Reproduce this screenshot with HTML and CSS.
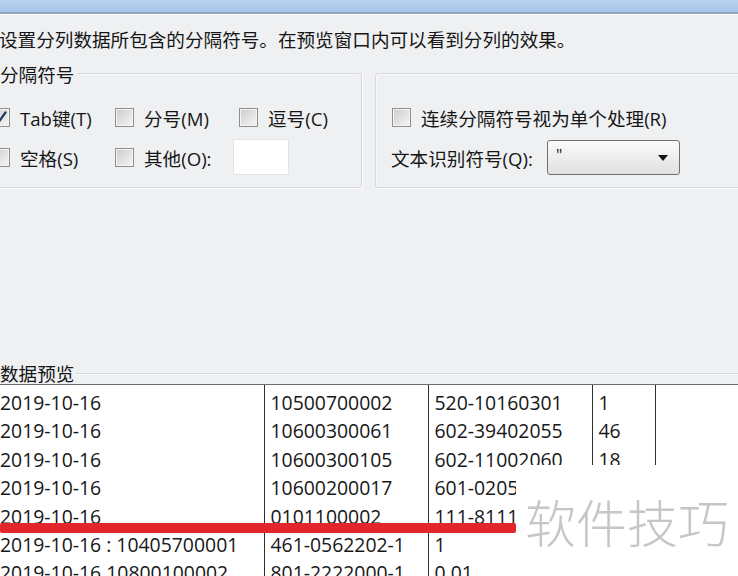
FILE: index.html
```html
<!DOCTYPE html>
<html lang="zh-CN">
<head>
  <meta charset="UTF-8" />
  <title>文本分列向导 - 第 2 步</title>
  <link rel="stylesheet" href="styles.css">
</head>
<body>
  <div class="titlebar"></div>

  <p class="intro">设置分列数据所包含的分隔符号。在预览窗口内可以看到分列的效果。</p>

  <div class="options">
    <div class="group group-delims">
      <div class="group-title">分隔符号</div>
      <div class="opt-row first-row">
        <label class="opt">
          <span class="checkbox checked">
            <svg viewBox="0 0 19 19" width="19" height="19"><path d="M4.5 9.5 L8 13.5 L14.5 4.5" fill="none" stroke="#1e3a68" stroke-width="2.2" stroke-linecap="round" stroke-linejoin="round"/></svg>
          </span>Tab键(T)
        </label>
        <label class="opt"><span class="checkbox"></span>分号(M)</label>
        <label class="opt"><span class="checkbox"></span>逗号(C)</label>
      </div>
      <div class="opt-row">
        <label class="opt"><span class="checkbox"></span>空格(S)</label>
        <label class="opt opt-short"><span class="checkbox"></span>其他(O):</label>
        <span class="textbox"></span>
      </div>
    </div>

    <div class="group group-more">
      <div class="opt-row">
        <label class="opt opt-wide"><span class="checkbox"></span>连续分隔符号视为单个处理(R)</label>
      </div>
      <div class="opt-row">
        <span class="field-label">文本识别符号(Q):</span>
        <span class="select">
          <span class="select-value">"</span>
          <svg class="select-arrow" viewBox="0 0 10 6" width="10" height="6"><path d="M0 0 H10 L5 6 Z" fill="#111"/></svg>
        </span>
      </div>
    </div>
  </div>

  <div class="preview">
    <div class="preview-head"><span>数据预览</span></div>
    <div class="preview-box">
      <table class="grid">
        <colgroup>
          <col class="c1"><col class="c2"><col class="c3"><col class="c4"><col>
        </colgroup>
        <tbody>
          <tr><td>2019-10-16</td><td>10500700002</td><td>520-10160301</td><td>1</td><td></td></tr>
          <tr><td>2019-10-16</td><td>10600300061</td><td>602-39402055</td><td>46</td><td></td></tr>
          <tr><td>2019-10-16</td><td>10600300105</td><td>602-11002060</td><td>18</td><td></td></tr>
          <tr><td>2019-10-16</td><td>10600200017</td><td>601-0205</td><td></td><td></td></tr>
          <tr><td>2019-10-16</td><td>0101100002</td><td>111-8111</td><td></td><td></td></tr>
          <tr><td>2019-10-16 : 10405700001</td><td>461-0562202-1</td><td>1</td><td></td><td></td></tr>
          <tr><td>2019-10-16 10800100002</td><td>801-2222000-1</td><td>0.01</td><td></td><td></td></tr>
        </tbody>
      </table>
      <div class="mark-line"></div>
      <div class="watermark">软件技巧</div>
    </div>
  </div>
</body>
</html>
```

FILE: styles.css
```css
:root {
  --bg: #eff0f2;
  --text: #161616;
  --etch: #d6d9dd;
}

html, body {
  overflow: hidden;
}

body {
  margin: 0;
  background: var(--bg);
  color: var(--text);
  font-family: "Open Sans", "Noto Sans CJK SC", sans-serif;
  font-size: 18.6px;
}

.titlebar {
  height: 12px;
  background: linear-gradient(#bad2f1, #a9c4ea);
  border-bottom: 2px solid #8fa4bb;
  box-shadow: 0 1px 0 #fbfbfb;
}

.intro {
  margin: 14px 0 0 -1px;
  line-height: 24px;
  white-space: nowrap;
}

.options {
  display: flex;
  gap: 13px;
  width: 780px;
  margin: 21px 0 0 -20px;
}

.group {
  box-sizing: border-box;
  border: 1px solid var(--etch);
  border-radius: 3px;
  box-shadow: inset 1px 1px 0 #fafafa, 1px 1px 0 #fafafa;
  padding-bottom: 10px;
}

.group-delims {
  width: 382px;
  padding-left: 10px;
}

.group-more {
  width: 385px;
  padding-top: 23px;
  padding-left: 16px;
}

.group-title {
  width: fit-content;
  margin: -11px 0 0 9px;
  padding-right: 3px;
  line-height: 24px;
  background: var(--bg);
}

.first-row {
  margin-top: 10px;
}

.opt-row {
  display: flex;
  align-items: center;
  height: 40px;
  white-space: nowrap;
}

.opt {
  display: flex;
  align-items: center;
  gap: 10px;
  width: 124px;
  flex-shrink: 0;
}

.opt-short { width: 118px; }
.opt-wide { width: auto; }

.checkbox {
  box-sizing: border-box;
  width: 19px;
  height: 19px;
  flex-shrink: 0;
  border: 1px solid #8e8f8f;
  background: linear-gradient(135deg, #cbcccd, #f6f6f6);
  box-shadow: inset 0 0 0 1px #f4f4f4;
  position: relative;
}

.checkbox svg {
  position: absolute;
  left: -1px;
  top: -1px;
}

.textbox {
  box-sizing: border-box;
  width: 56px;
  height: 36px;
  background: #fff;
  border: 1px solid #e1e3e6;
}

.field-label {
  width: 156px;
  margin-left: -1px;
}

.select {
  box-sizing: border-box;
  display: flex;
  align-items: flex-start;
  width: 133px;
  height: 35px;
  padding: 2px 10px 0 8px;
  border: 1px solid #707070;
  border-radius: 3px;
  background: linear-gradient(#fbfbfb, #ececec 55%, #e0e0e0);
  position: relative;
}

.select-value {
  line-height: 24px;
  font-size: 16px;
}

.select-arrow {
  position: absolute;
  right: 11px;
  top: 14px;
}

.preview {
  margin-top: 176px;
}

.preview-head {
  display: flex;
  align-items: center;
  height: 20px;
  line-height: 20px;
  gap: 2px;
}

.preview-head::after {
  content: "";
  flex: 1;
  border-top: 1px solid var(--etch);
  border-bottom: 1px solid #fafafa;
}

.preview-box {
  position: relative;
  width: 760px;
  height: 191px;
  background: #fff;
  border-top: 1px solid #6e6e6e;
  overflow: hidden;
}

.grid {
  table-layout: fixed;
  width: 760px;
  border-collapse: collapse;
  font-size: 19.4px;
  color: #181818;
}

.grid .c1 { width: 264px; }
.grid .c2 { width: 164px; }
.grid .c3 { width: 164px; }
.grid .c4 { width: 63px; }

.grid td {
  padding: 0 0 0 6px;
  line-height: 28.4px;
  white-space: nowrap;
  overflow: hidden;
  border-left: 1px solid #2e2e2e;
}

.grid td:first-child {
  padding-left: 0;
  border-left: none;
}

.grid tr:first-child td {
  padding-top: 4px;
}

.mark-line {
  position: absolute;
  left: 0;
  top: 138px;
  width: 516px;
  height: 10px;
  background: #e3262b;
  border-radius: 2px;
}

.watermark {
  position: absolute;
  left: 516px;
  top: 80px;
  width: 222px;
  bottom: 0;
  display: flex;
  align-items: center;
  justify-content: center;
  background: #fff;
  color: #c6c6c6;
  font-family: "Noto Sans CJK SC", sans-serif;
  font-weight: 300;
  font-size: 51px;
}
```
